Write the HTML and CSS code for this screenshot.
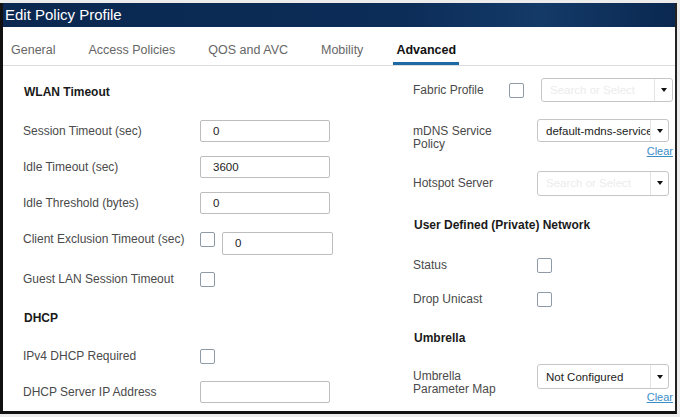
FILE: index.html
```html
<!DOCTYPE html>
<html lang="en">
<head>
    <meta charset="UTF-8">
    <meta name="viewport" content="width=device-width, initial-scale=1.0">
    <title>Edit Policy Profile</title>
    <link rel="stylesheet" href="styles.css">
</head>
<body>
    <div class="dialog">
        <div class="title-bar">Edit Policy Profile</div>

        <div class="tabs">
            <div class="tab">General</div>
            <div class="tab">Access Policies</div>
            <div class="tab">QOS and AVC</div>
            <div class="tab">Mobility</div>
            <div class="tab active">Advanced</div>
        </div>

        <div class="content">
            <!-- left column -->
            <div class="col col-left">
                <div class="heading heading-wlan">WLAN Timeout</div>
                <div class="row">
                    <label class="label">Session Timeout (sec)</label>
                    <div class="input">0</div>
                </div>
                <div class="row">
                    <label class="label">Idle Timeout (sec)</label>
                    <div class="input">3600</div>
                </div>
                <div class="row">
                    <label class="label">Idle Threshold (bytes)</label>
                    <div class="input">0</div>
                </div>
                <div class="row">
                    <label class="label">Client Exclusion Timeout (sec)</label>
                    <div class="checkbox"></div>
                    <div class="input input-short">0</div>
                </div>
                <div class="row row-guest">
                    <label class="label">Guest LAN Session Timeout</label>
                    <div class="checkbox"></div>
                </div>

                <div class="heading heading-dhcp">DHCP</div>
                <div class="row row-ipv4">
                    <label class="label">IPv4 DHCP Required</label>
                    <div class="checkbox"></div>
                </div>
                <div class="row">
                    <label class="label">DHCP Server IP Address</label>
                    <div class="input"></div>
                </div>
            </div>

            <!-- right column -->
            <div class="col col-right">
                <div class="row row-fabric">
                    <label class="label label-fabric">Fabric Profile</label>
                    <div class="checkbox"></div>
                    <div class="select select-fabric">
                        <span class="select-text placeholder">Search or Select</span>
                        <span class="select-arrow"></span>
                    </div>
                </div>
                <div class="row row-top row-mdns">
                    <label class="label label-r label-wrap">mDNS Service Policy</label>
                    <div class="control">
                        <div class="select">
                            <span class="select-text">default-mdns-service</span>
                            <span class="select-arrow"></span>
                        </div>
                        <a class="clear" href="#">Clear</a>
                    </div>
                </div>
                <div class="row row-hotspot">
                    <label class="label label-r">Hotspot Server</label>
                    <div class="select select-tall">
                        <span class="select-text placeholder">Search or Select</span>
                        <span class="select-arrow"></span>
                    </div>
                </div>

                <div class="heading heading-r">User Defined (Private) Network</div>
                <div class="row row-short row-status">
                    <label class="label label-r">Status</label>
                    <div class="checkbox"></div>
                </div>
                <div class="row row-short">
                    <label class="label label-r">Drop Unicast</label>
                    <div class="checkbox"></div>
                </div>

                <div class="heading heading-r heading-umbrella">Umbrella</div>
                <div class="row row-top row-umbrella">
                    <label class="label label-r label-wrap">Umbrella Parameter Map</label>
                    <div class="control">
                        <div class="select select-tall">
                            <span class="select-text">Not Configured</span>
                            <span class="select-arrow"></span>
                        </div>
                        <a class="clear clear-tight" href="#">Clear</a>
                    </div>
                </div>
            </div>
        </div>
    </div>
</body>
</html>
```

FILE: styles.css
```css
body {
    margin: 0;
    background-color: #ececec;
    font-family: "Liberation Sans", Arial, sans-serif;
    font-size: 12px;
    color: #4a4a4a;
}

.dialog {
    margin: 3px 3px 3px 0;
    height: 408px;
    background: #fff;
    border-left: 3px solid #111;
    border-right: 2px solid #222;
    border-bottom: 3px solid #111;
    overflow: hidden;
}

.title-bar {
    height: 24px;
    line-height: 23px;
    padding-left: 2px;
    font-size: 15px;
    color: #fff;
    background: linear-gradient(to right, #0a2850, #0c2d58 60%, #143a68 80%, #0a2850);
}

/* tabs */
.tabs {
    display: flex;
    gap: 27px;
    padding-left: 5px;
    border-bottom: 1px solid #dcdcdc;
}

.tab {
    padding: 15px 3px 4px;
    line-height: 16px;
    font-size: 12.5px;
    color: #666;
    border-bottom: 3px solid transparent;
}

.tab.active {
    color: #111;
    font-weight: bold;
    border-bottom-color: #1d6aa5;
}

/* form */
.content {
    display: flex;
}

.col-left {
    width: 390px;
    padding-left: 20px;
    flex-shrink: 0;
}

.col-right {
    flex: 1;
}

.heading {
    height: 30px;
    line-height: 30px;
    padding-left: 1px;
    font-weight: bold;
    color: #1a1a1a;
}

.heading-wlan {
    margin-top: 11px;
    margin-bottom: 6px;
}

.heading-dhcp {
    margin-top: 6px;
}

.heading-r {
    margin-top: 9px;
}

.heading-umbrella {
    margin-top: 7px;
}

.row {
    display: flex;
    align-items: center;
    height: 36px;
}

.row-short {
    height: 34px;
}

.row-top {
    align-items: flex-start;
    height: auto;
}

.row-guest {
    margin-top: 4px;
}

.row-ipv4 {
    margin-top: 5px;
}

.label {
    width: 177px;
    flex-shrink: 0;
}

.label-r {
    width: 124px;
}

.label-fabric {
    width: 96px;
}

.label-wrap {
    width: 90px;
    padding-right: 34px;
    padding-top: 6px;
    line-height: 13px;
}

.input {
    width: 116px;
    height: 20px;
    line-height: 20px;
    padding-left: 12px;
    border: 1px solid #bdbdbd;
    border-radius: 2px;
    color: #222;
    font-size: 11.5px;
}

.input-short {
    width: 97px;
    height: 21px;
    margin-left: 7px;
    margin-top: 9px;
}

.checkbox {
    width: 13px;
    height: 13px;
    border: 1px solid #8e9aa6;
    border-radius: 2px;
    flex-shrink: 0;
}

.select {
    width: 130px;
    height: 21px;
    border: 1px solid #c6c6c6;
    border-radius: 3px;
    display: flex;
    align-items: center;
    font-size: 11.5px;
    color: #222;
}

.select-tall {
    height: 23px;
}

.select-fabric {
    height: 22px;
    margin-left: 17px;
}

.select-text {
    flex: 1;
    padding-left: 8px;
    white-space: nowrap;
    overflow: hidden;
}

.placeholder {
    color: #ececec;
}

.select-arrow {
    width: 17px;
    height: 100%;
    border-left: 1px solid #e4e4e4;
    display: flex;
    align-items: center;
    justify-content: center;
    flex-shrink: 0;
}

.select-arrow::after {
    content: "";
    border-top: 4px solid #111;
    border-left: 3px solid transparent;
    border-right: 3px solid transparent;
}

.control {
    display: flex;
    flex-direction: column;
    align-items: flex-end;
}

.clear {
    margin-top: 3px;
    margin-right: -4px;
    font-size: 11px;
    line-height: 12px;
    color: #3a8ec8;
}

.clear-tight {
    margin-top: 2px;
}

.row-fabric {
    margin-top: 6px;
}

.row-mdns {
    margin-top: 11px;
}

.row-hotspot {
    margin-top: 8px;
}

.row-status {
    margin-top: 8px;
}

.row-umbrella {
    margin-top: 11px;
}
```
